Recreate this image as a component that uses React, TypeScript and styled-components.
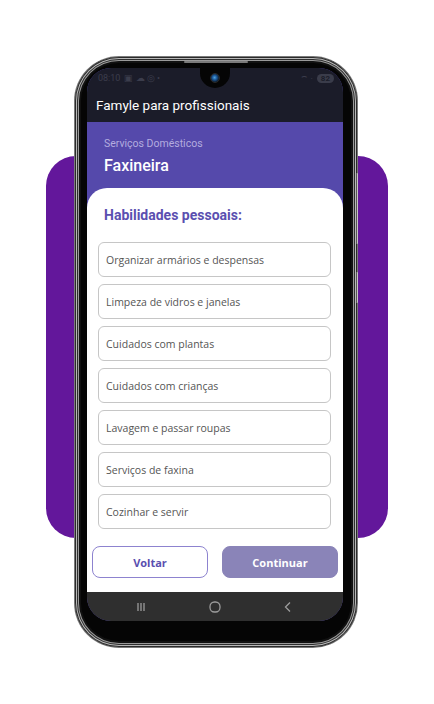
import styled, { createGlobalStyle } from 'styled-components';

const GlobalStyle = createGlobalStyle`
    html, body {
        margin: 0;
        padding: 0;
        background: #ffffff;
    }
    * {
        box-sizing: border-box;
    }
`;

const skills = [
    'Organizar armários e despensas',
    'Limpeza de vidros e janelas',
    'Cuidados com plantas',
    'Cuidados com crianças',
    'Lavagem e passar roupas',
    'Serviços de faxina',
    'Cozinhar e servir',
];

const Page = styled.div`
    position: relative;
    width: 434px;
    height: 704px;
    display: flex;
    justify-content: center;
    padding-top: 57px;
    padding-right: 2px;
    font-family: Roboto, "Noto Sans", sans-serif;
    overflow: hidden;
`;

const Backdrop = styled.div`
    position: absolute;
    left: 46px;
    top: 156px;
    width: 342px;
    height: 382px;
    border-radius: 30px;
    background: #63179b;
`;

const Phone = styled.div`
    position: relative;
    width: 282px;
    height: 590px;
    border-radius: 44px;
    background: #050505;
    padding: 11px 13px 26px 12px;
    box-shadow:
        0 0 0 1px #7a7a7a,
        inset 0 0 0 1px #2a2a2a,
        inset 0 0 0 2px #b8b8b8,
        inset 0 0 0 3px #2e2e2e,
        inset 0 0 0 4px #9a9a9a,
        inset 0 0 0 6px #111111;
`;

const Speaker = styled.div`
    position: absolute;
    top: 4px;
    left: 50%;
    width: 64px;
    height: 2px;
    margin-left: -32px;
    border-radius: 2px;
    background: #7a7a7a;
`;

const SideKey = styled.div<{ $top: number; $height: number }>`
    position: absolute;
    right: -1px;
    top: ${(p) => p.$top}px;
    width: 2px;
    height: ${(p) => p.$height}px;
    border-radius: 1px;
    background: #c4c4c4;
    border-left: 1px solid #555;
`;

const Screen = styled.div`
    position: relative;
    width: 256px;
    height: 553px;
    border-radius: 24px;
    overflow: hidden;
    background: #5549ab;
    display: flex;
    flex-direction: column;
`;

const Notch = styled.div`
    position: absolute;
    top: -4px;
    left: 50%;
    width: 30px;
    height: 24px;
    margin-left: -15px;
    background: #050505;
    border-radius: 0 0 15px 15px;
    display: flex;
    justify-content: center;
    align-items: center;
    padding-top: 4px;
`;

const Camera = styled.div`
    width: 10px;
    height: 10px;
    border-radius: 50%;
    background: radial-gradient(circle at 45% 45%, #4fa3e0 0, #1d5a9a 35%, #0c1826 75%);
    border: 1px solid #2a2a2a;
`;

const StatusBar = styled.div`
    height: 20px;
    background: #1b1c29;
    display: flex;
    align-items: center;
    justify-content: space-between;
    padding: 0 9px 0 11px;
    font-size: 9px;
    color: #3b3d4c;
`;

const StatusGroup = styled.div`
    display: flex;
    align-items: center;
    gap: 4px;
`;

const Battery = styled.div`
    height: 9px;
    padding: 0 4px;
    border-radius: 5px;
    background: #3a3c4a;
    color: #1b1c29;
    font-size: 8px;
    font-weight: 700;
    line-height: 9px;
`;

const AppBar = styled.div`
    height: 34px;
    background: #1b1c29;
    display: flex;
    align-items: center;
    padding: 0 9px;
    color: #ffffff;
    font-size: 13.5px;
`;

const Header = styled.div`
    padding: 15px 17px 0;
    height: 66px;
    display: flex;
    flex-direction: column;
`;

const Category = styled.div`
    font-size: 10.5px;
    color: #b3acdf;
    line-height: 14px;
`;

const Role = styled.div`
    margin-top: 5px;
    font-size: 16px;
    font-weight: 500;
    color: #ffffff;
    line-height: 20px;
`;

const Card = styled.div`
    flex: 1;
    background: #ffffff;
    border-radius: 20px 20px 0 0;
    display: flex;
    flex-direction: column;
    padding: 17px 12px 0 11px;
`;

const SectionTitle = styled.div`
    padding-left: 6px;
    font-size: 14px;
    font-weight: 700;
    color: #5a4fb0;
    line-height: 20px;
    margin-bottom: 17px;
`;

const SkillList = styled.div`
    display: flex;
    flex-direction: column;
    gap: 7px;
`;

const SkillItem = styled.div`
    height: 35px;
    border: 1px solid #c6c6c6;
    border-radius: 6px;
    display: flex;
    align-items: center;
    padding-left: 7px;
    font-family: "Open Sans", "Noto Sans", sans-serif;
    font-size: 10.5px;
    color: #555555;
`;

const Actions = styled.div`
    display: flex;
    gap: 14px;
    margin: 17px -7px 0 -6px;
`;

const ActionButton = styled.div<{ $primary?: boolean }>`
    flex: 1;
    height: 32px;
    border-radius: 8px;
    display: flex;
    align-items: center;
    justify-content: center;
    font-family: "Open Sans", "Noto Sans", sans-serif;
    font-size: 11px;
    font-weight: 700;
    border: 1px solid ${(p) => (p.$primary ? '#8a84b8' : '#8d83cf')};
    background: ${(p) => (p.$primary ? '#8a84b8' : '#ffffff')};
    color: ${(p) => (p.$primary ? '#ffffff' : '#5a4fb0')};
`;

const NavBar = styled.div`
    height: 29px;
    background: #2f2f2f;
    display: flex;
    justify-content: space-between;
    align-items: center;
    padding: 0 48px 0 47px;
`;

const NavIcon = styled.svg`
    width: 14px;
    height: 14px;
    stroke: #9c9c9c;
    fill: none;
    stroke-width: 1.3;
`;

export default function App() {
    return (
        <Page>
            <GlobalStyle />
            <Backdrop />
            <Phone>
                <Speaker />
                <SideKey $top={116} $height={71} />
                <SideKey $top={215} $height={31} />
                <Screen>
                    <Notch>
                        <Camera />
                    </Notch>
                    <StatusBar>
                        <StatusGroup>
                            <span>08:10</span>
                            <span>▣ ☁ ◎ •</span>
                        </StatusGroup>
                        <StatusGroup>
                            <span>⌔ ·</span>
                            <Battery>82</Battery>
                        </StatusGroup>
                    </StatusBar>
                    <AppBar>Famyle para profissionais</AppBar>
                    <Header>
                        <Category>Serviços Domésticos</Category>
                        <Role>Faxineira</Role>
                    </Header>
                    <Card>
                        <SectionTitle>Habilidades pessoais:</SectionTitle>
                        <SkillList>
                            {skills.map((skill) => (
                                <SkillItem key={skill}>{skill}</SkillItem>
                            ))}
                        </SkillList>
                        <Actions>
                            <ActionButton>Voltar</ActionButton>
                            <ActionButton $primary>Continuar</ActionButton>
                        </Actions>
                    </Card>
                    <NavBar>
                        <NavIcon viewBox="0 0 14 14">
                            <path d="M4 3v8M7 3v8M10 3v8" />
                        </NavIcon>
                        <NavIcon viewBox="0 0 14 14">
                            <rect x="2" y="2" width="10" height="10" rx="4.5" />
                        </NavIcon>
                        <NavIcon viewBox="0 0 14 14">
                            <path d="M9 2.5L4.5 7 9 11.5" />
                        </NavIcon>
                    </NavBar>
                </Screen>
            </Phone>
        </Page>
    );
}
